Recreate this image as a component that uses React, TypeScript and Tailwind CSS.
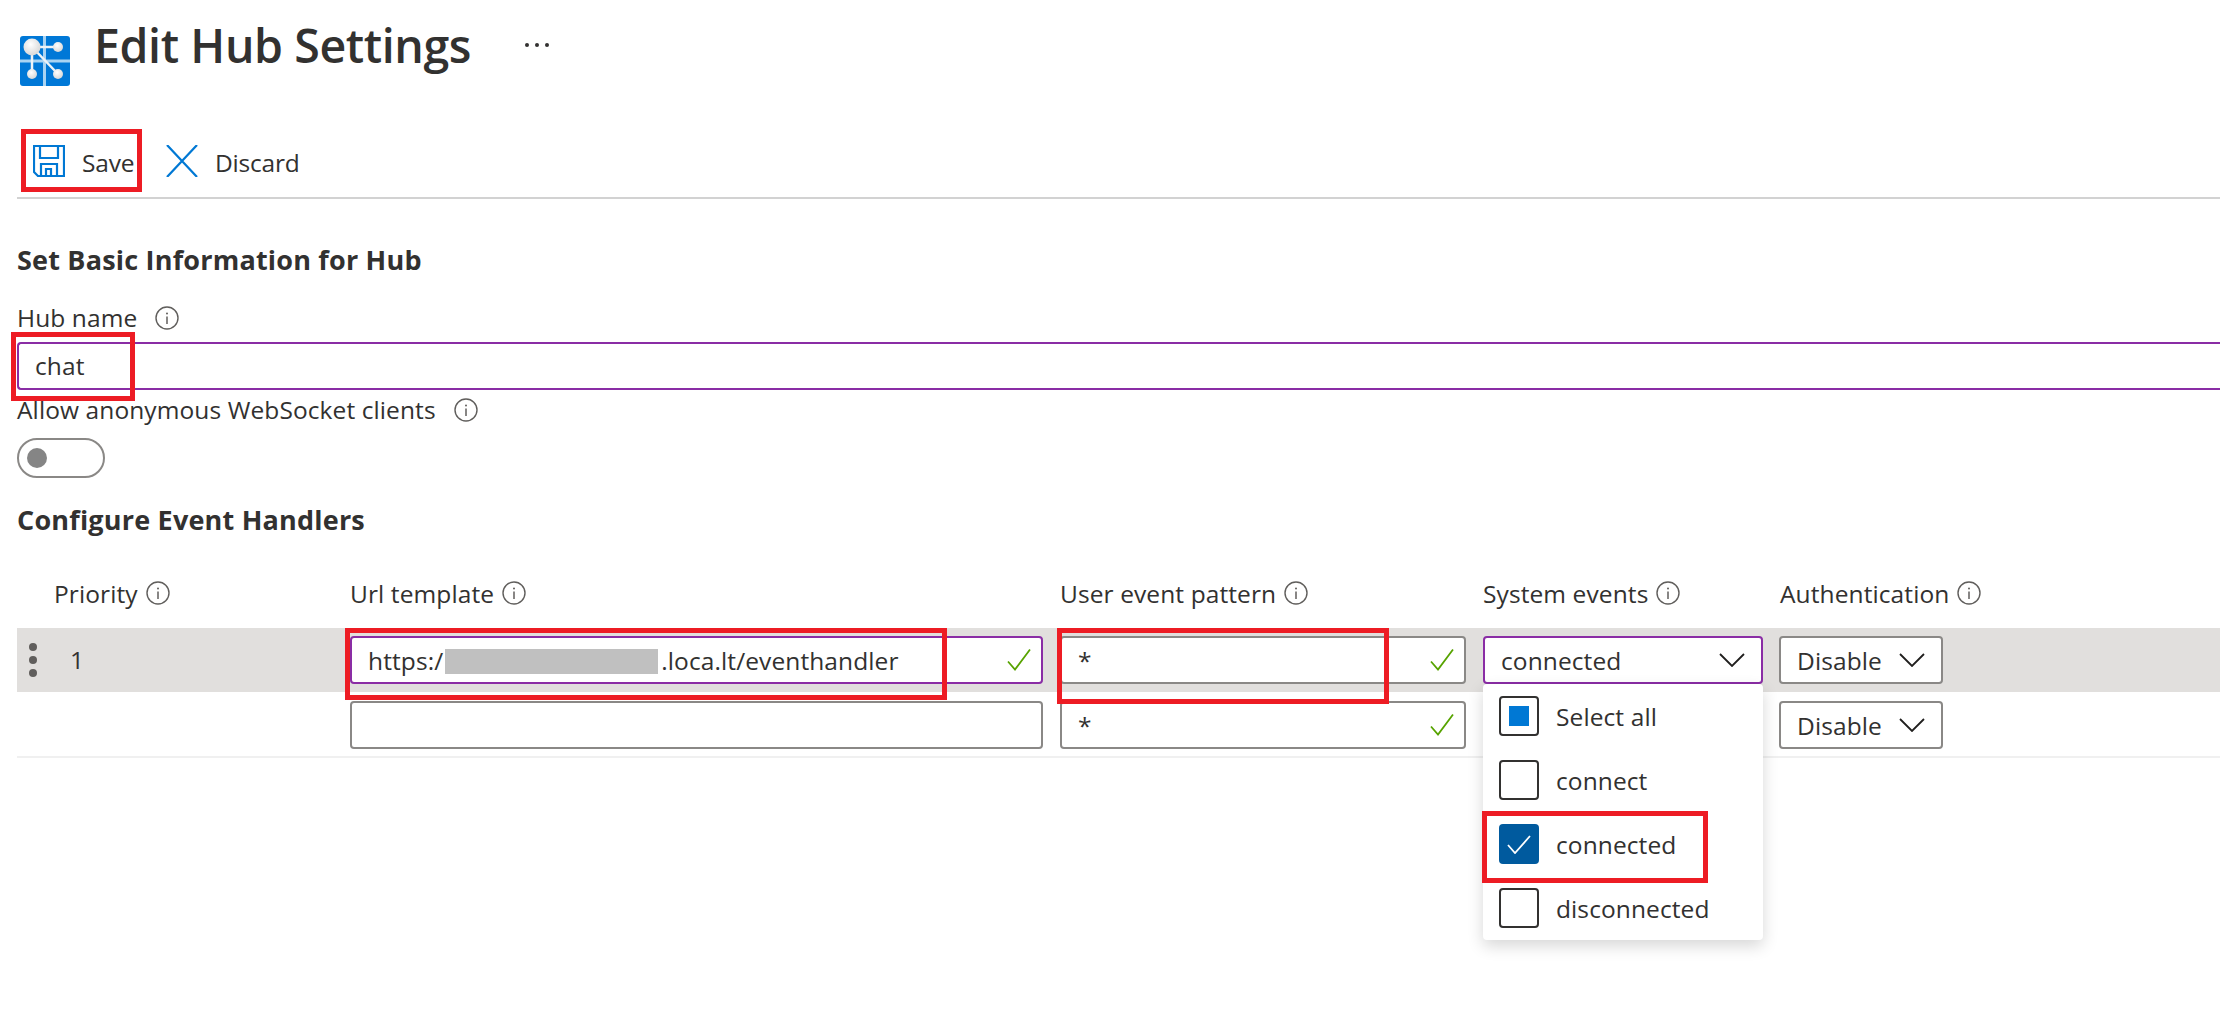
const cols = "grid grid-cols-[316px_693px_406px_280px_1fr] gap-x-[17px]";

function Info({ className = "" }: { className?: string }) {
  return (
    <svg viewBox="0 0 24 24" className={"w-6 h-6 shrink-0 " + className} fill="none">
      <circle cx="12" cy="12" r="11" stroke="#605e5c" strokeWidth="1.4" />
      <circle cx="12" cy="7.4" r="1" fill="#605e5c" />
      <path d="M12 10.5v7.5" stroke="#605e5c" strokeWidth="1.5" />
    </svg>
  );
}

function Check() {
  return (
    <svg viewBox="0 0 24 24" className="w-6 h-6 shrink-0" fill="none">
      <path d="M1 13.5l7 8L23 1.5" stroke="#57a300" strokeWidth="1.8" />
    </svg>
  );
}

function Chevron() {
  return (
    <svg viewBox="0 0 26 14" className="w-[26px] h-[14px] shrink-0" fill="none">
      <path d="M1 1l12 12L25 1" stroke="#201f1e" strokeWidth="1.8" />
    </svg>
  );
}

function Logo() {
  return (
    <svg viewBox="0 0 50 50" className="w-[50px] h-[50px] shrink-0 mt-9">
      <defs>
        <radialGradient id="ball" cx="0.42" cy="0.35" r="0.75">
          <stop offset="0" stopColor="#ffffff" />
          <stop offset="1" stopColor="#d2d2d2" />
        </radialGradient>
      </defs>
      <rect width="50" height="50" rx="3" fill="#0078d7" />
      <path d="M0 25h50M24.5 0v50" stroke="#a9d3f2" strokeWidth="3" />
      <path d="M12 11h26M12 11v27M12 11l26 27" stroke="#eef3f7" strokeWidth="2.5" fill="none" />
      <circle cx="12" cy="11" r="8.5" fill="url(#ball)" />
      <circle cx="38" cy="11" r="5" fill="url(#ball)" />
      <circle cx="12" cy="38" r="5" fill="url(#ball)" />
      <circle cx="38" cy="38" r="5" fill="url(#ball)" />
    </svg>
  );
}

function SaveIcon() {
  return (
    <svg viewBox="0 0 32 32" className="w-8 h-8 shrink-0" fill="none" stroke="#0078d4" strokeWidth="2.2">
      <path d="M1 1h30v30H5l-4-4z" />
      <path d="M7 1v12h18V1" />
      <path d="M8 31V19h16v12" />
      <path d="M13 31v-7h5v7" />
    </svg>
  );
}

function Box({ state }: { state: "none" | "partial" | "checked" }) {
  if (state === "checked") {
    return (
      <div className="w-10 h-10 rounded bg-[#005a9e] flex items-center justify-center shrink-0">
        <svg viewBox="0 0 24 20" className="w-6 h-5" fill="none">
          <path d="M1 11l7 8L23 2" stroke="#fff" strokeWidth="1.8" />
        </svg>
      </div>
    );
  }
  return (
    <div className="w-10 h-10 rounded border-2 border-[#323130] flex items-center justify-center shrink-0">
      {state === "partial" && <div className="w-5 h-5 bg-[#0078d4]" />}
    </div>
  );
}

function Option({ label, state }: { label: string; state: "none" | "partial" | "checked" }) {
  return (
    <div className="h-16 pl-4 flex items-center gap-[17px]">
      <Box state={state} />
      <span className="pt-[3px]">{label}</span>
    </div>
  );
}

function Field({ focused, check, children }: { focused?: boolean; check?: boolean; children?: React.ReactNode }) {
  return (
    <div
      className={
        "h-12 rounded border-2 bg-white flex items-center justify-between pl-4 pr-[10px] " +
        (focused ? "border-[#8a2da5]" : "border-[#8a8886]")
      }
    >
      <div className="flex items-center min-w-0 pt-[3px]">{children}</div>
      {check && <Check />}
    </div>
  );
}

function Select({ label, focused, className = "" }: { label: string; focused?: boolean; className?: string }) {
  return (
    <div
      className={
        "h-12 rounded border-2 bg-white flex items-center justify-between pl-4 pr-4 " +
        (focused ? "border-[#8a2da5] " : "border-[#8a8886] ") +
        className
      }
    >
      <span className="pt-[3px]">{label}</span>
      <Chevron />
    </div>
  );
}

function Head({ label }: { label: string }) {
  return (
    <div className="flex items-center gap-2 h-9 font-medium">
      <span className="pt-[2px]">{label}</span>
      <Info />
    </div>
  );
}

function RedBox({ className }: { className: string }) {
  return <div className={"absolute border-[5px] border-[#ed1c24] pointer-events-none " + className} />;
}

export default function App() {
  return (
    <div className="relative w-[2220px] h-[1028px] overflow-hidden bg-white text-[#323130] text-[24.5px] font-['Open_Sans','Liberation_Sans',sans-serif] tracking-[0.1px]">
      <header className="flex h-[129px] pl-5">
        <Logo />
        <h1 className="ml-6 mt-[13px] w-[375px] h-[64px] whitespace-nowrap text-[46.5px] leading-[64px] font-semibold tracking-[-0.4px]">Edit Hub Settings</h1>
        <div className="ml-[56px] mt-[43px] flex gap-[6px] h-1">
          <span className="w-1 h-1 rounded-full bg-[#323130]" />
          <span className="w-1 h-1 rounded-full bg-[#323130]" />
          <span className="w-1 h-1 rounded-full bg-[#323130]" />
        </div>
      </header>

      <nav className="ml-[17px] h-[70px] border-b-2 border-[#d2d2d2] flex items-start pt-4 pl-4">
        <div className="flex items-center gap-[17px] h-8 w-[133px]">
          <SaveIcon />
          <span className="pt-[5px] tracking-[-0.2px]">Save</span>
        </div>
        <div className="flex items-center gap-[17px] h-8">
          <svg viewBox="0 0 32 32" className="w-8 h-8 shrink-0" fill="none" stroke="#0078d4" strokeWidth="2.2">
            <path d="M1 0l30 32M31 0L1 32" />
          </svg>
          <span className="pt-[5px] tracking-[-0.2px]">Discard</span>
        </div>
      </nav>

      <main className="pl-[17px]">
        <h2 className="mt-[43px] h-9 leading-9 text-[27px] font-bold tracking-[0.2px]">Set Basic Information for Hub</h2>

        <div className="mt-[22px] h-9 flex items-center gap-[18px]">
          <span className="pt-[1px]">Hub name</span>
          <Info />
        </div>
        <div className="mt-[6px] h-12 border-2 border-[#8a2da5] border-r-0 rounded-l flex items-center pl-4">
          <span className="pt-[1px]">chat</span>
        </div>

        <div className="mt-[2px] h-9 flex items-center gap-[18px]">
          <span>Allow anonymous WebSocket clients</span>
          <Info />
        </div>
        <div className="mt-[10px] w-[88px] h-10 rounded-full border-2 border-[#8a8886] flex items-center pl-2">
          <div className="w-5 h-5 rounded-full bg-[#858585]" />
        </div>

        <h2 className="mt-6 h-9 leading-9 text-[27px] font-bold tracking-[0.2px]">Configure Event Handlers</h2>

        <div className={cols + " mt-[37px]"}>
          <div className="pl-[37px]"><Head label="Priority" /></div>
          <Head label="Url template" />
          <Head label="User event pattern" />
          <Head label="System events" />
          <Head label="Authentication" />
        </div>

        <div className={cols + " mt-[17px] h-16 bg-[#e1dfdd] items-center"}>
          <div className="flex items-center pl-3">
            <div className="flex flex-col gap-[5px]">
              <span className="w-2 h-2 rounded-full bg-[#605e5c]" />
              <span className="w-2 h-2 rounded-full bg-[#605e5c]" />
              <span className="w-2 h-2 rounded-full bg-[#605e5c]" />
            </div>
            <span className="ml-[33px]">1</span>
          </div>
          <Field focused check>
            <span className="whitespace-nowrap">https:/</span>
            <span className="w-[213px] h-[25px] bg-[#c0c0c0] ml-[2px] mr-[3px]" />
            <span className="whitespace-nowrap">.loca.lt/eventhandler</span>
          </Field>
          <Field check>*</Field>
          <div className="relative">
            <Select label="connected" focused />
            <div className="absolute left-0 right-0 top-12 z-10 h-64 rounded bg-white shadow-[0_6px_16px_rgba(0,0,0,0.16)]">
              <Option label="Select all" state="partial" />
              <Option label="connect" state="none" />
              <Option label="connected" state="checked" />
              <Option label="disconnected" state="none" />
            </div>
          </div>
          <Select label="Disable" className="w-[164px] -ml-px" />
        </div>

        <div className={cols + " h-[66px] pt-[9px] border-b-2 border-[#f0f0f0]"}>
          <div />
          <Field />
          <Field check>*</Field>
          <div />
          <Select label="Disable" className="w-[164px] -ml-px" />
        </div>
      </main>

      <RedBox className="left-[21px] top-[129px] w-[121px] h-[63px]" />
      <RedBox className="left-[11px] top-[332px] w-[124px] h-[69px]" />
      <RedBox className="left-[345px] top-[628px] w-[602px] h-[72px]" />
      <RedBox className="left-[1057px] top-[628px] w-[332px] h-[76px]" />
      <RedBox className="left-[1482px] top-[811px] w-[226px] h-[72px] z-20" />
    </div>
  );
}
